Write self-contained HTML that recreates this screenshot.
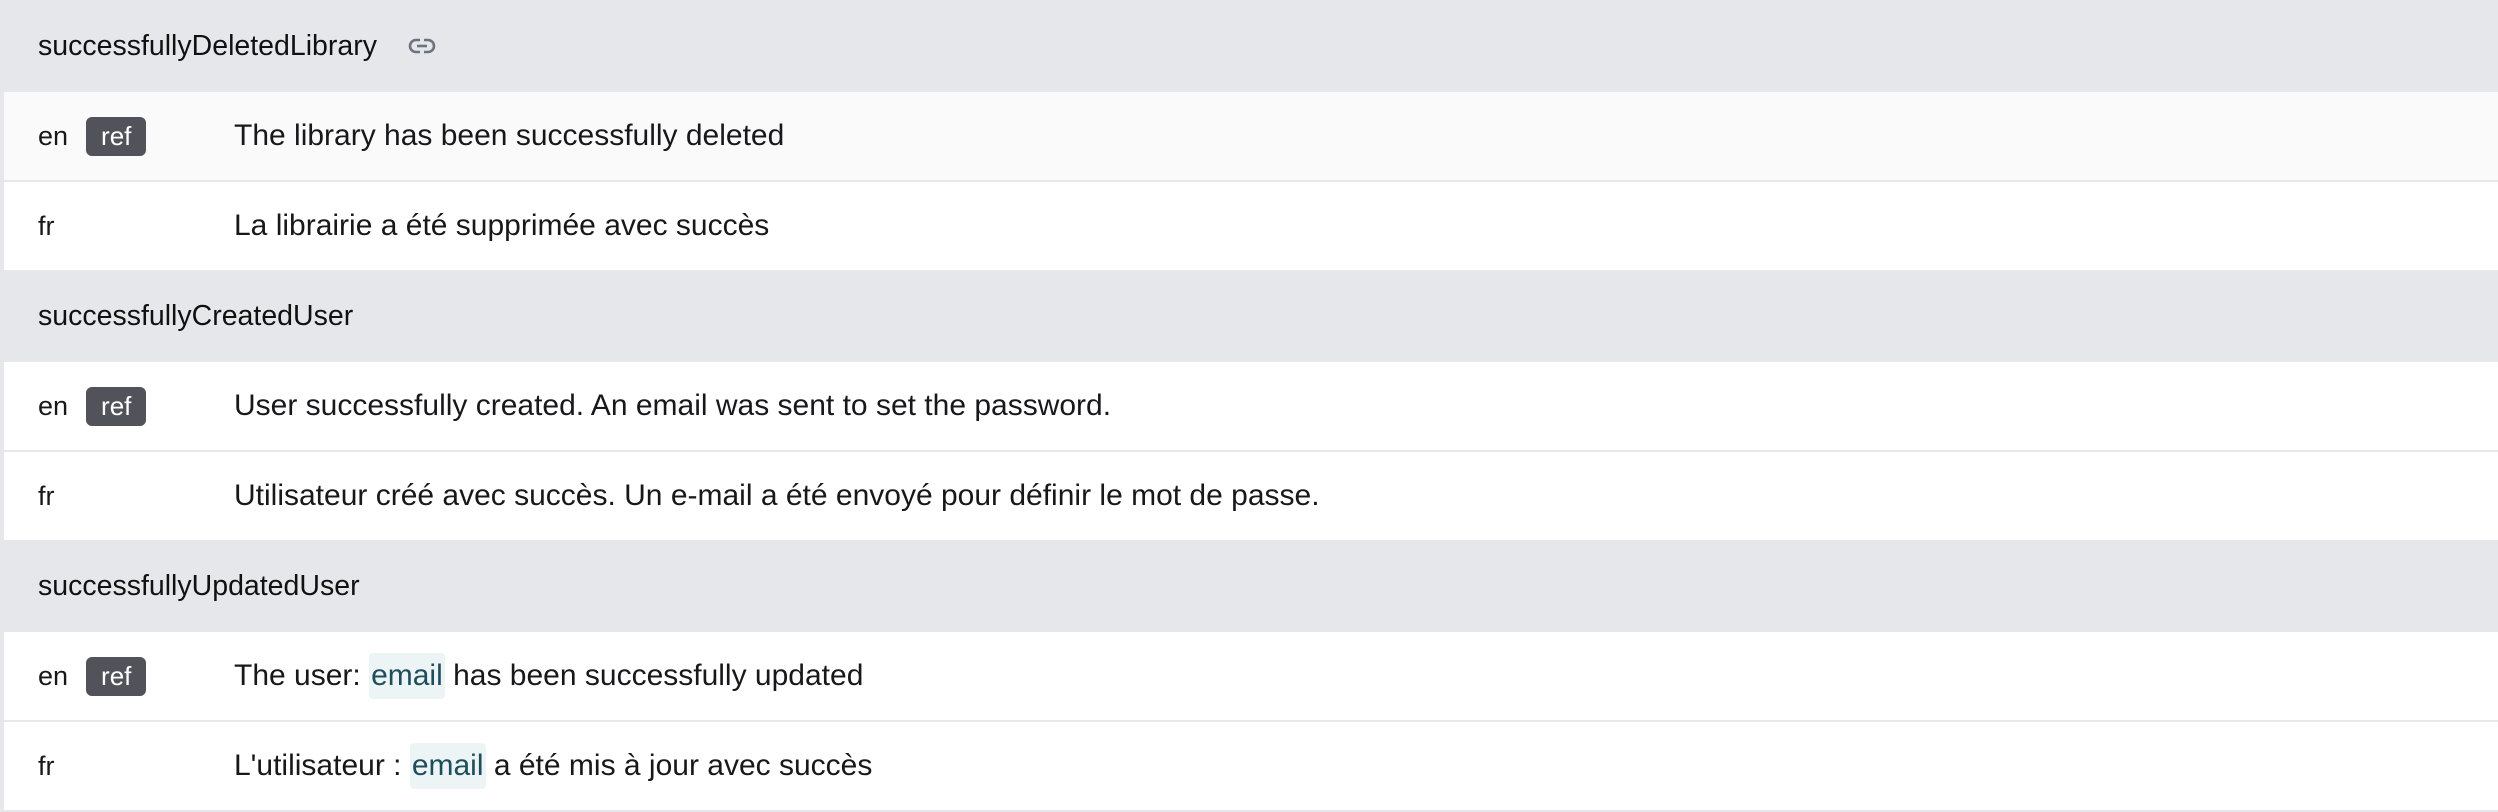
<!DOCTYPE html>
<html><head><meta charset="utf-8"><style>
html,body{margin:0;padding:0;background:#fff;}
body{width:2498px;height:812px;overflow:hidden;font-family:"Liberation Sans",sans-serif;color:#18181b;}
.wrap{border-top:2px solid #e5e7eb;border-left:4px solid #e5e7eb;}
.row{height:88px;border-bottom:2px solid #e5e7eb;display:flex;align-items:center;position:relative;}
.hdr{background:#e5e7eb;font-size:28.5px;padding-left:34px;color:#111;}
.alt{background:#fafafa;}
.lang{position:absolute;left:34px;top:0;height:88px;display:flex;align-items:center;font-size:27px;}
.ref{display:inline-block;background:#52525b;color:#fff;border-radius:6px;font-size:26px;padding:0 15px;height:39px;line-height:38px;margin-left:18px;}
.txt{position:absolute;left:230px;top:0;height:88px;display:flex;align-items:center;font-size:30px;white-space:pre;}
.ph{background:#edf4f6;color:#1e4d5c;border-radius:4px;padding:6px 2px;}
</style></head><body><div class="wrap">
<div class="row hdr">successfullyDeletedLibrary<svg style="margin-left:30px" width="30" height="22" viewBox="0 0 30 22"><rect x="3" y="5" width="24" height="12" rx="6" fill="none" stroke="#6b7280" stroke-width="2.6"/><rect x="13" y="3" width="4" height="16" fill="#e5e7eb"/><line x1="10" y1="11" x2="20" y2="11" stroke="#6b7280" stroke-width="2.6"/></svg></div>
<div class="row alt"><div class="lang">en<span class="ref">ref</span></div><div class="txt">The library has been successfully deleted</div></div>
<div class="row"><div class="lang">fr</div><div class="txt">La librairie a été supprimée avec succès</div></div>
<div class="row hdr">successfullyCreatedUser</div>
<div class="row"><div class="lang">en<span class="ref">ref</span></div><div class="txt">User successfully created. An email was sent to set the password.</div></div>
<div class="row"><div class="lang">fr</div><div class="txt">Utilisateur créé avec succès. Un e-mail a été envoyé pour définir le mot de passe.</div></div>
<div class="row hdr">successfullyUpdatedUser</div>
<div class="row"><div class="lang">en<span class="ref">ref</span></div><div class="txt">The user: <span class="ph">email</span> has been successfully updated</div></div>
<div class="row"><div class="lang">fr</div><div class="txt">L'utilisateur : <span class="ph">email</span> a été mis à jour avec succès</div></div>
</div></body></html>
